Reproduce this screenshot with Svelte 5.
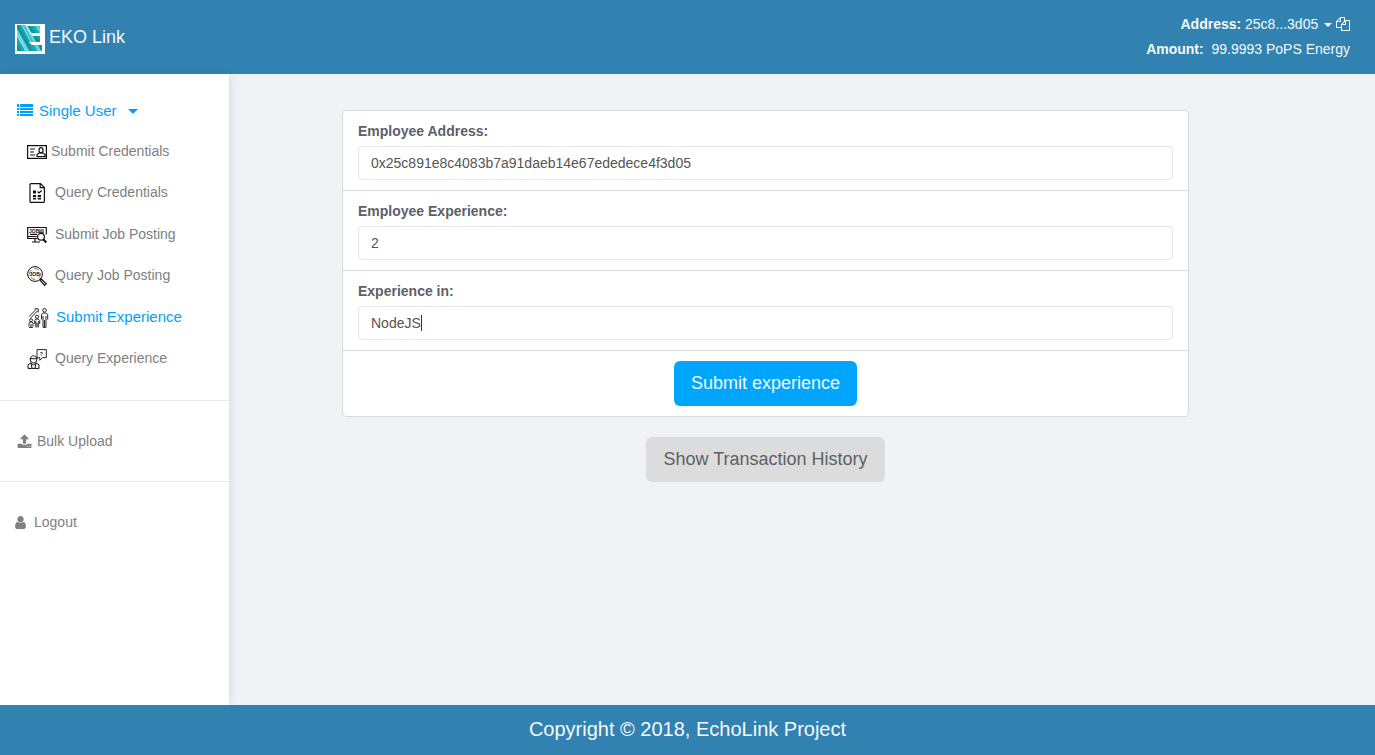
<script>
  import { onMount } from "svelte";

  const menu = [
    { id: "submit-credentials", label: "Submit Credentials" },
    { id: "query-credentials", label: "Query Credentials" },
    { id: "submit-job", label: "Submit Job Posting" },
    { id: "query-job", label: "Query Job Posting" },
    { id: "submit-experience", label: "Submit Experience" },
    { id: "query-experience", label: "Query Experience" },
  ];

  let active = "submit-experience";
  let menuOpen = true;
  let address = "0x25c891e8c4083b7a91daeb14e67ededece4f3d05";
  let experience = "2";
  let experienceIn = "NodeJS";
  let experienceInput;
  let focused = false;
  let cursorLeft = 0;

  onMount(() => {
    experienceInput.focus();
    experienceInput.setSelectionRange(experienceIn.length, experienceIn.length);
    moveCursor();
  });

  // the field draws its own steady cursor, placed after the text before it
  function moveCursor() {
    const style = getComputedStyle(experienceInput);
    const context = document.createElement("canvas").getContext("2d");
    context.font = `${style.fontSize} ${style.fontFamily}`;
    const before = experienceInput.value.slice(0, experienceInput.selectionStart);
    cursorLeft = Math.round(context.measureText(before).width);
  }

  function copyAddress() {
    navigator.clipboard.writeText(address);
  }
</script>

<div class="page">
  <header>
    <a class="brand" href="#home">
      <svg class="logo" viewBox="0 0 30 30" aria-hidden="true">
        <defs>
          <linearGradient id="teal" x1="0" y1="0" x2="9" y2="-5" gradientUnits="userSpaceOnUse" spreadMethod="repeat">
            <stop offset="0" stop-color="#0b8c99" />
            <stop offset="0.55" stop-color="#14b3bf" />
            <stop offset="0.85" stop-color="#7fe0e4" />
            <stop offset="1" stop-color="#12a5b1" />
          </linearGradient>
        </defs>
        <rect width="30" height="30" fill="#fff" />
        <path fill="url(#teal)" d="M2 1h9l4 8 3 3h7v6h-11l3 3h10v6H2z" />
        <path fill="url(#teal)" d="M12 2h13v7h-9z" />
        <path fill="none" stroke="#d5f3f5" stroke-width="0.8" d="M2 11l9 16M7 1l9 17" />
      </svg>
      <span>EKO Link</span>
    </a>
    <div class="account">
      <div>
        <b>Address:</b>
        <button class="plain" type="button">25c8...3d05 <i class="caret"></i></button>
        <button class="plain copy" type="button" aria-label="Copy address" on:click={copyAddress}>
          <svg viewBox="0 0 1792 1792" width="14" height="14"><path fill="currentColor" d="M1696 384q40 0 68 28t28 68v1216q0 40-28 68t-68 28h-960q-40 0-68-28t-28-68v-288h-544q-40 0-68-28t-28-68v-672q0-40 20-88t48-76l408-408q28-28 76-48t88-20h416q40 0 68 28t28 68v328q68-40 128-40h416zm-544 213l-299 299h299v-299zm-640-384l-299 299h299v-299zm196 647l316-316v-416h-384v416q0 40-28 68t-68 28h-416v640h512v-256q0-40 20-88t48-76zm956 804v-1152h-384v416q0 40-28 68t-68 28h-416v640h896z" /></svg>
        </button>
      </div>
      <div><b>Amount:</b>&nbsp; 99.9993 PoPS Energy</div>
    </div>
  </header>

  <div class="body">
    <nav>
      <section class="group">
        <button class="toggle" type="button" aria-expanded={menuOpen} on:click={() => (menuOpen = !menuOpen)}>
          <svg viewBox="0 0 16 14" width="16" height="14" fill="currentColor" aria-hidden="true">
            <path d="M0 0h2v3H0zM3 0h13v3H3zM0 4h2v2H0zM3 4h13v2H3zM0 7h2v2H0zM3 7h13v2H3zM0 10h2v2H0zM3 10h13v2H3z" />
          </svg>
          Single User
          <i class="caret wide"></i>
        </button>
        {#if menuOpen}
          <ul>
            {#each menu as item}
              <li>
                <a
                  href={`#${item.id}`}
                  class:tight={item.id === "submit-credentials"}
                  class:active={item.id === active}
                  on:click={() => (active = item.id)}
                >
                  <svg class="icon" viewBox="0 0 20 20" aria-hidden="true">
                    {#if item.id === "submit-credentials"}
                      <path d="M.6 3.6h18.8v12.8H.6zM3 7h5M3 10h4M3 13h5M10 14.5v-2l2-1.5h4l2 1.5v2z" />
                      <ellipse cx="14" cy="8.2" rx="2" ry="2.6" />
                    {:else if item.id === "query-credentials"}
                      <path d="M3 1.6q0-1 1-1h9.5l3.9 4v13.8q0 1-1 1H4q-1 0-1-1zM13.2.7v4h4" />
                      <path d="M10.5 8.5l1.5 1.5L14.7 7.5" />
                      <path class="solid" d="M6 7.5h3v3H6zM6 12h3v2H6zM6 14.7h3v1.8H6zM10.7 12h3.3v2h-3.3zM10.7 14.7H14v1.8h-3.3z" />
                    {:else if item.id === "submit-job"}
                      <path d="M10.5 13.5H.7v-11h18.6v7M.7 11.5h9M5 17h8M8 14v3M12 5h5M12 7.2h5M3 9.3h7" />
                      <circle cx="14" cy="11.8" r="3.4" fill="#fff" />
                      <path d="M16.5 14.5l2.8 3" stroke-width="2" />
                      <text x="2" y="7.8">JOB</text>
                    {:else if item.id === "query-job"}
                      <circle cx="8" cy="8" r="7.4" stroke-width="1" />
                      <circle cx="8" cy="8" r="5.4" stroke-width="0.6" stroke-dasharray="5 3" />
                      <path d="M13 14l1.2-1.2 5 5-1.7 1.6z" />
                      <text x="2.5" y="10">JOB</text>
                    {:else if item.id === "submit-experience"}
                      <path stroke-width="0.9" d="M1 8.5L8 1.5M2.5 10L9.5 3M6.5.8h3.7v3.7" />
                      <g stroke-width="0.9">
                        <circle cx="3" cy="12.2" r="1.5" />
                        <path d="M1 18.5v-3.2l1-1.3h2l1 1.3v3.2M3 16v3.5M1 19.4h4" />
                        <circle cx="9" cy="8.8" r="1.6" />
                        <path d="M6.7 16v-3.5L8 11h2.2l1.5 1.5V16M7.8 13v6.4M10.3 13v6.4M9 15v4.4" />
                        <circle cx="16.5" cy="2.3" r="1.8" />
                        <path d="M13.5 11.5V6.4L15 5h3l1.7 1.5v5M15 8v11.4h1.5V12M18 8v11.4h-1.5" />
                      </g>
                    {:else}
                      <path d="M10 .6h9.3v8h-3.5l-3 2.6V8.6H10z" stroke-width="0.9" />
                      <path stroke-width="1" d="M3.3 10.5c0-5 6.5-5 6.5 0 0 4.5-6.5 4.5-6.5 0zM2.7 9.7h7.8M1 19.4v-3.6l3-2 2.5 2.5L9 13.8l3 2v3.6zM4 14l1 5M9 14l-1 5" />
                      <text x="12.8" y="6.9">?</text>
                    {/if}
                  </svg>
                  {item.label}
                </a>
              </li>
            {/each}
          </ul>
        {/if}
      </section>
      <section>
        <a class="entry" href="#bulk-upload">
          <svg viewBox="0 0 1792 1792" width="15" height="15"><path fill="currentColor" d="M1344 1472q0-26-19-45t-45-19-45 19-19 45 19 45 45 19 45-19 19-45zm256 0q0-26-19-45t-45-19-45 19-19 45 19 45 45 19 45-19 19-45zm128-224v320q0 40-28 68t-68 28h-1472q-40 0-68-28t-28-68v-320q0-40 28-68t68-28h427q21 56 70.5 92t110.5 36h256q61 0 110.5-36t70.5-92h427q40 0 68 28t28 68zm-325-648q-17 40-59 40h-256v448q0 26-19 45t-45 19h-256q-26 0-45-19t-19-45v-448h-256q-42 0-59-40-17-39 14-69l448-448q18-19 45-19t45 19l448 448q31 30 14 69z" /></svg>
          Bulk Upload
        </a>
      </section>
      <section>
        <a class="entry logout" href="#logout">
          <svg viewBox="128 0 1536 1792" width="13" height="15"><path fill="currentColor" d="M1536 1399q0 109-62.5 187t-150.5 78h-854q-88 0-150.5-78t-62.5-187q0-85 8.5-160.5t31.5-152 58.5-131 94-89 134.5-34.5q131 128 313 128t313-128q76 0 134.5 34.5t94 89 58.5 131 31.5 152 8.5 160.5zm-256-887q0 159-112.5 271.5t-271.5 112.5-271.5-112.5-112.5-271.5 112.5-271.5 271.5-112.5 271.5 112.5 112.5 271.5z" /></svg>
          Logout
        </a>
      </section>
    </nav>

    <main>
      <div class="content">
        <form on:submit|preventDefault>
          <div class="row">
            <label for="address">Employee Address:</label>
            <input id="address" type="text" bind:value={address} />
          </div>
          <div class="row">
            <label for="experience">Employee Experience:</label>
            <input id="experience" type="text" bind:value={experience} />
          </div>
          <div class="row">
            <label for="experience-in">Experience in:</label>
            <div class="field">
              <input
                id="experience-in"
                type="text"
                bind:value={experienceIn}
                bind:this={experienceInput}
                on:input={moveCursor}
                on:keyup={moveCursor}
                on:click={moveCursor}
                on:focus={() => (focused = true)}
                on:blur={() => (focused = false)}
              />
              {#if focused}
                <span class="cursor" style="margin-left: {cursorLeft}px"></span>
              {/if}
            </div>
          </div>
          <div class="row actions">
            <button class="btn primary" type="submit">Submit experience</button>
          </div>
        </form>
        <button class="btn" type="button">Show Transaction History</button>
      </div>
    </main>
  </div>

  <footer>Copyright © 2018, EchoLink Project</footer>
</div>

<style>
  :global(body) {
    margin: 0;
  }

  .page,
  .page * {
    box-sizing: border-box;
  }

  .page {
    display: flex;
    flex-direction: column;
    min-height: 100vh;
    background: #eff3f6;
    color: #5c6166;
    font: 14px/20px "Liberation Sans", Arial, sans-serif;
  }

  a {
    color: inherit;
    text-decoration: none;
  }

  button,
  input {
    font: inherit;
    color: inherit;
  }

  button {
    cursor: pointer;
  }

  header {
    display: flex;
    justify-content: space-between;
    align-items: center;
    padding: 12px 25px 12px 15px;
    background: #3182b0;
    color: #f5f8fa;
  }

  .brand {
    display: flex;
    gap: 4px;
    padding-top: 4px;
    font-size: 18px;
    line-height: 26px;
  }

  .logo {
    width: 30px;
    height: 30px;
  }

  .account {
    line-height: 25px;
    text-align: right;
  }

  .plain {
    padding: 0;
    border: 0;
    background: none;
  }

  .copy svg {
    display: block;
    margin-bottom: -2px;
  }

  .caret {
    display: inline-block;
    margin-left: 2px;
    vertical-align: middle;
    border: 4px solid transparent;
    border-top-color: currentColor;
    border-bottom: 0;
  }

  .caret.wide {
    margin-left: 5px;
    border-width: 5px 5px 0;
  }

  .body {
    display: flex;
    flex: 1;
  }

  nav {
    flex: 0 0 229px;
    background: #fff;
    color: #808080;
    box-shadow: 1px 0 8px rgba(60, 90, 110, 0.14);
  }

  section {
    display: flex;
    flex-direction: column;
    padding: 30px 0;
    border-bottom: 1px solid #e9e9e9;
  }

  section:last-child {
    border-bottom: 0;
  }

  .group {
    padding: 27px 0 21px;
  }

  .toggle {
    display: flex;
    align-items: center;
    gap: 6px;
    height: 20px;
    margin-bottom: 9px;
    padding: 0 17px;
    border: 0;
    background: none;
    color: #03a1f5;
    font-size: 15px;
  }

  ul {
    display: flex;
    flex-direction: column;
    height: 249px;
    margin: 0;
    padding: 0;
    list-style: none;
  }

  li {
    display: flex;
    flex: 1;
    align-items: center;
  }

  li a {
    display: flex;
    gap: 8px;
    padding-left: 27px;
  }

  li a.tight {
    gap: 4px;
  }

  li a.active {
    padding-left: 28px;
    color: #03a1f5;
    font-size: 15px;
  }

  .icon {
    width: 20px;
    height: 20px;
    margin: 1px 0 -1px;
    fill: none;
    stroke: #111;
    stroke-width: 1.2;
    overflow: visible;
  }

  .icon .solid {
    fill: #111;
    stroke: none;
  }

  .icon text {
    fill: #111;
    stroke: none;
    font-size: 5px;
    font-weight: bold;
  }

  .entry {
    display: flex;
    align-items: center;
    gap: 5px;
    height: 20px;
    padding-left: 17px;
  }

  .logout {
    gap: 7px;
    padding-left: 14px;
  }

  main {
    display: grid;
    flex: 1;
    grid-template-columns: 113fr 847fr 186fr;
    align-items: start;
    padding-top: 36px;
  }

  .content {
    display: flex;
    grid-column: 2;
    flex-direction: column;
    align-items: center;
    gap: 20px;
  }

  form {
    width: 100%;
    background: #fff;
    border: 1px solid #d9d9d9;
    border-radius: 4px;
  }

  .row {
    display: flex;
    flex-direction: column;
    gap: 5px;
    padding: 10px 15px;
    border-bottom: 1px solid #d9d9d9;
  }

  .actions {
    align-items: center;
    border-bottom: 0;
  }

  label {
    font-weight: bold;
  }

  input {
    display: block;
    width: 100%;
    height: 34px;
    padding: 6px 12px;
    border: 1px solid #e6e6e6;
    border-radius: 4px;
    outline: none;
    background: #fff;
    color: #555;
  }

  .field {
    position: relative;
  }

  .field input {
    caret-color: transparent;
  }

  .cursor {
    position: absolute;
    top: 9px;
    left: 13px;
    width: 1px;
    height: 16px;
    background: #333;
    pointer-events: none;
  }

  .btn {
    padding: 10px 16px;
    border: 1px solid transparent;
    border-radius: 6px;
    background: #dcdcdc;
    font-size: 18px;
    line-height: 23px;
  }

  .primary {
    background: #00a5ff;
    color: #f5fbff;
  }

  footer {
    padding: 11px 12px 13px;
    background: #3182b0;
    color: #f5f8fa;
    font-size: 20px;
    line-height: 26px;
    text-align: center;
  }
</style>
